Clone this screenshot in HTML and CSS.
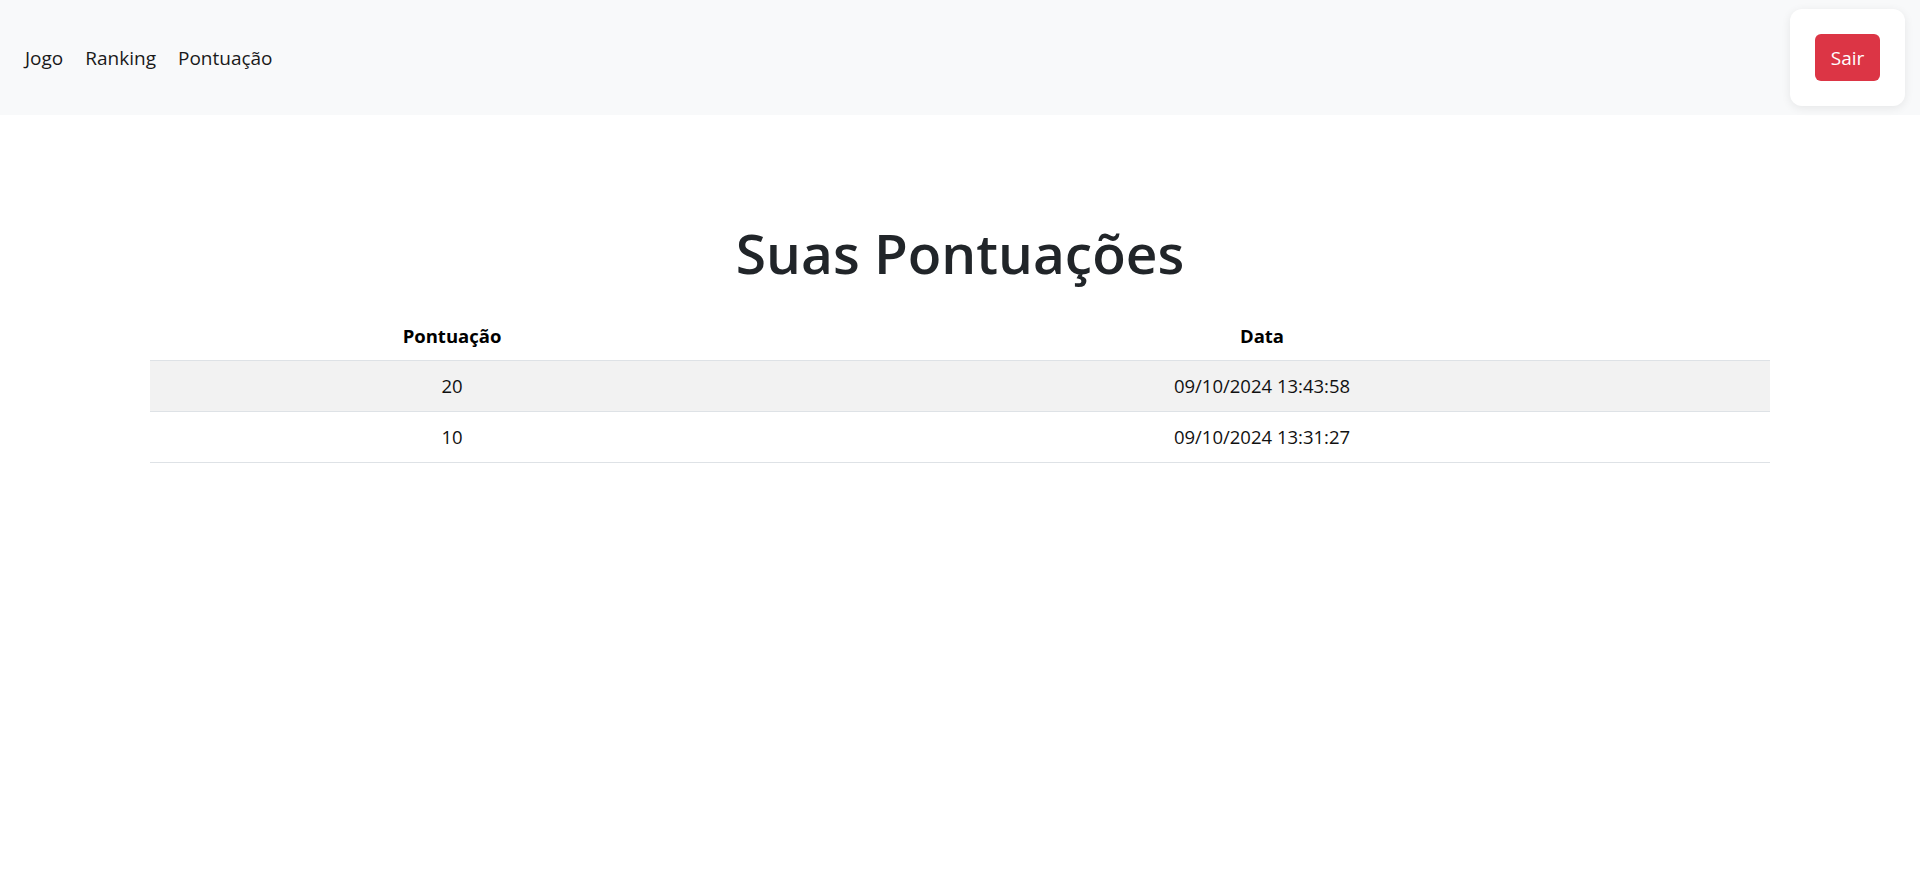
FILE: index.html
```html
<!DOCTYPE html>
<html lang="pt-BR">
<head>
<meta charset="utf-8">
<title>Suas Pontuações</title>
<link rel="stylesheet" href="styles.css">
</head>
<body>
<nav class="navbar">
  <ul class="nav-links">
    <li><a href="#" class="nav-link">Jogo</a></li>
    <li><a href="#" class="nav-link">Ranking</a></li>
    <li><a href="#" class="nav-link">Pontuação</a></li>
  </ul>
  <div class="logout-card">
    <button class="btn-danger">Sair</button>
  </div>
</nav>
<main class="container">
  <h1 class="title">Suas Pontuações</h1>
  <table class="scores">
    <thead>
      <tr><th class="col-score">Pontuação</th><th>Data</th></tr>
    </thead>
    <tbody>
      <tr class="striped"><td>20</td><td>09/10/2024 13:43:58</td></tr>
      <tr><td>10</td><td>09/10/2024 13:31:27</td></tr>
    </tbody>
  </table>
</main>
</body>
</html>
```
FILE: styles.css
```css
* { box-sizing: border-box; }
body {
  margin: 0;
  font-family: "Open Sans", "Noto Sans", sans-serif;
  color: #212529;
  background: #fff;
}
.navbar {
  height: 115px;
  background: #f8f9fa;
  display: flex;
  align-items: center;
  justify-content: space-between;
  padding: 0 15px 0 14px;
}
.nav-links {
  list-style: none;
  margin: 0;
  padding: 0;
  display: flex;
}
.nav-link {
  display: block;
  padding: 10px 11px;
  font-size: 19px;
  color: #1a1a1a;
  text-decoration: none;
}
.logout-card {
  background: #fff;
  border-radius: 12px;
  padding: 25px;
  box-shadow: 0 2px 10px rgba(0,0,0,0.08);
}
.btn-danger {
  display: block;
  width: 65px;
  height: 47px;
  border: none;
  border-radius: 6px;
  background: #dc3545;
  color: #fff;
  font-family: inherit;
  font-size: 19px;
  padding: 0;
}
.container {
  width: 1620px;
  margin: 0 auto;
  padding-top: 102px;
}
.title {
  margin: 0 0 23px;
  text-align: center;
  font-size: 55px;
  line-height: 72px;
  font-weight: 600;
  color: #212529;
}
.scores {
  width: 100%;
  border-collapse: collapse;
  font-size: 18.5px;
  color: #111;
}
.scores th {
  height: 48px;
  font-weight: 700;
  color: #000;
  border-bottom: 1px solid #dee2e6;
  text-align: center;
}
.scores .col-score { width: 604px; }
.scores td {
  height: 51px;
  text-align: center;
  border-bottom: 1px solid #dee2e6;
}
.scores .striped td { background: #f2f2f2; }
```
